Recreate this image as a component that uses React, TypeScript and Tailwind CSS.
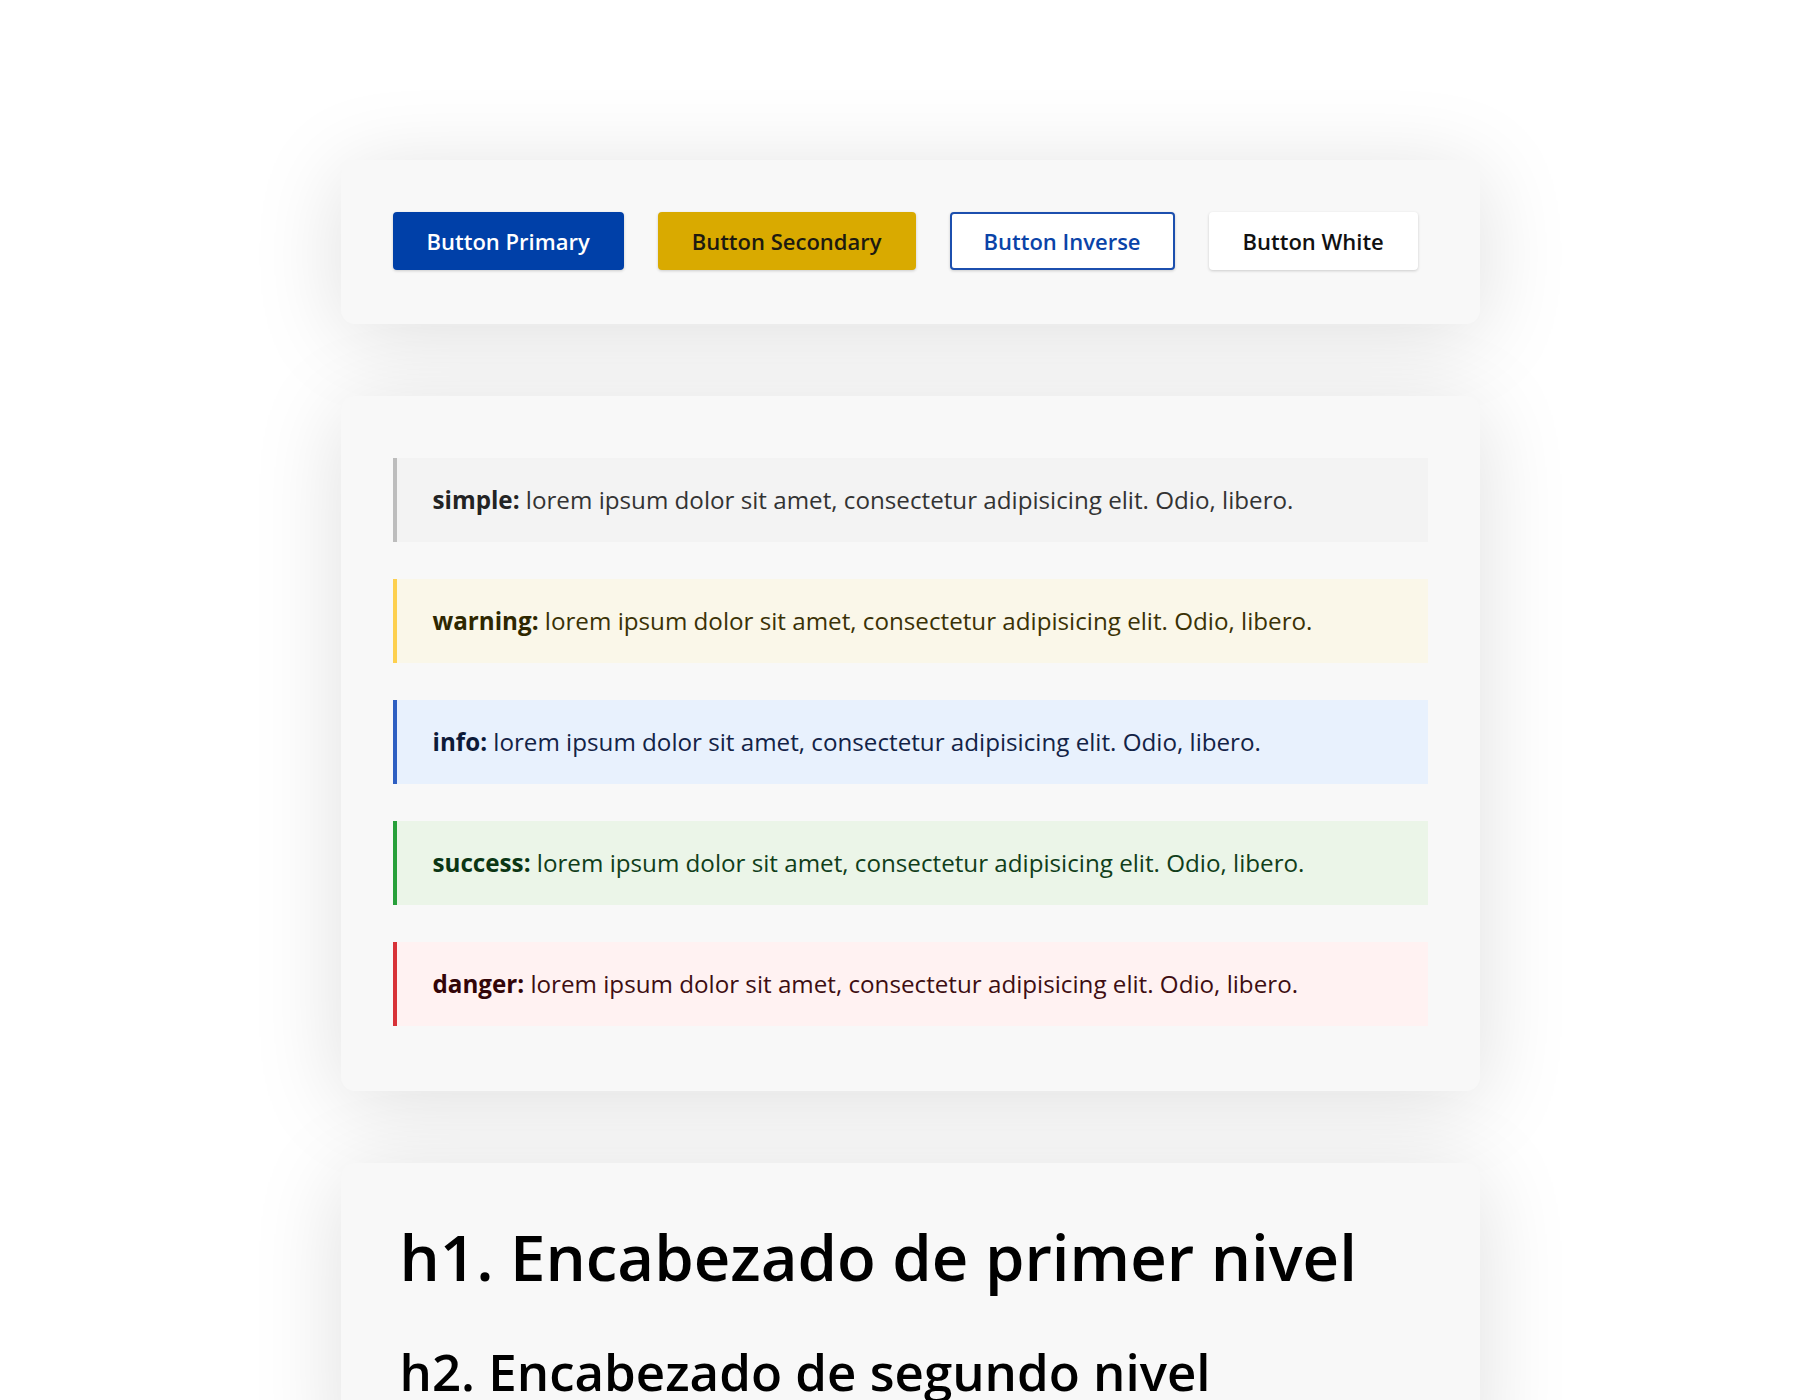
const buttons = [
  {
    label: "Button Primary",
    cls: "bg-[#0040a8] text-white border-[#0040a8]",
  },
  {
    label: "Button Secondary",
    cls: "bg-[#d9aa00] text-[#1d1a10] border-[#d9aa00]",
  },
  {
    label: "Button Inverse",
    cls: "bg-white text-[#0a43a8] border-[#1c4fae]",
  },
  {
    label: "Button White",
    cls: "bg-white text-[#111111] border-white",
  },
];

const alerts = [
  {
    name: "simple",
    box: "bg-[#f3f3f3] border-[#bdbdbd] text-[#333333]",
    label: "text-[#232323]",
  },
  {
    name: "warning",
    box: "bg-[#faf7e9] border-[#fdd04f] text-[#3a3206]",
    label: "text-[#2e2700]",
  },
  {
    name: "info",
    box: "bg-[#e8f1fd] border-[#2e5fc2] text-[#132346]",
    label: "text-[#0d1a38]",
  },
  {
    name: "success",
    box: "bg-[#ebf5e8] border-[#27a03a] text-[#103e1a]",
    label: "text-[#0b3614]",
  },
  {
    name: "danger",
    box: "bg-[#fff2f2] border-[#d83238] text-[#3e0e12]",
    label: "text-[#330508]",
  },
];

const card =
  "w-[1139px] bg-[#f8f8f8] rounded-[14px] shadow-[0_12px_90px_rgba(0,0,0,0.13)]";

export default function App() {
  return (
    <div className="min-h-[1400px] bg-white font-['Open_Sans',sans-serif] overflow-hidden">
      <div className="flex flex-col items-center pt-[160px] gap-[72px]">
        {/* buttons */}
        <div className={`${card} p-[52px] pb-[54px] flex items-center gap-[34px]`}>
          {buttons.map((b) => (
            <button
              key={b.label}
              className={`shrink-0 whitespace-nowrap h-[58px] px-[32px] rounded-[4px] border-2 text-[22px] font-semibold shadow-[0_1px_3px_rgba(0,0,0,0.18)] ${b.cls}`}
            >
              {b.label}
            </button>
          ))}
        </div>

        {/* alerts */}
        <div className={`${card} pt-[62px] pb-[65px] px-[52px] flex flex-col gap-[37px]`}>
          {alerts.map((a) => (
            <div
              key={a.name}
              className={`h-[84px] border-l-4 pl-[36px] flex items-center text-[24.2px] ${a.box}`}
            >
              <p>
                <b className={`font-bold ${a.label}`}>{a.name}:</b> lorem ipsum
                dolor sit amet, consectetur adipisicing elit. Odio, libero.
              </p>
            </div>
          ))}
        </div>

        {/* headings */}
        <div className={`${card} pt-[56px] px-[59px] pb-[60px] flex flex-col gap-[46px]`}>
          <h1 className="text-[63.5px] leading-[1.2] font-semibold text-black whitespace-nowrap">
            h1. Encabezado de primer nivel
          </h1>
          <h2 className="text-[51px] leading-[1.2] font-semibold text-black whitespace-nowrap">
            h2. Encabezado de segundo nivel
          </h2>
        </div>
      </div>
    </div>
  );
}
